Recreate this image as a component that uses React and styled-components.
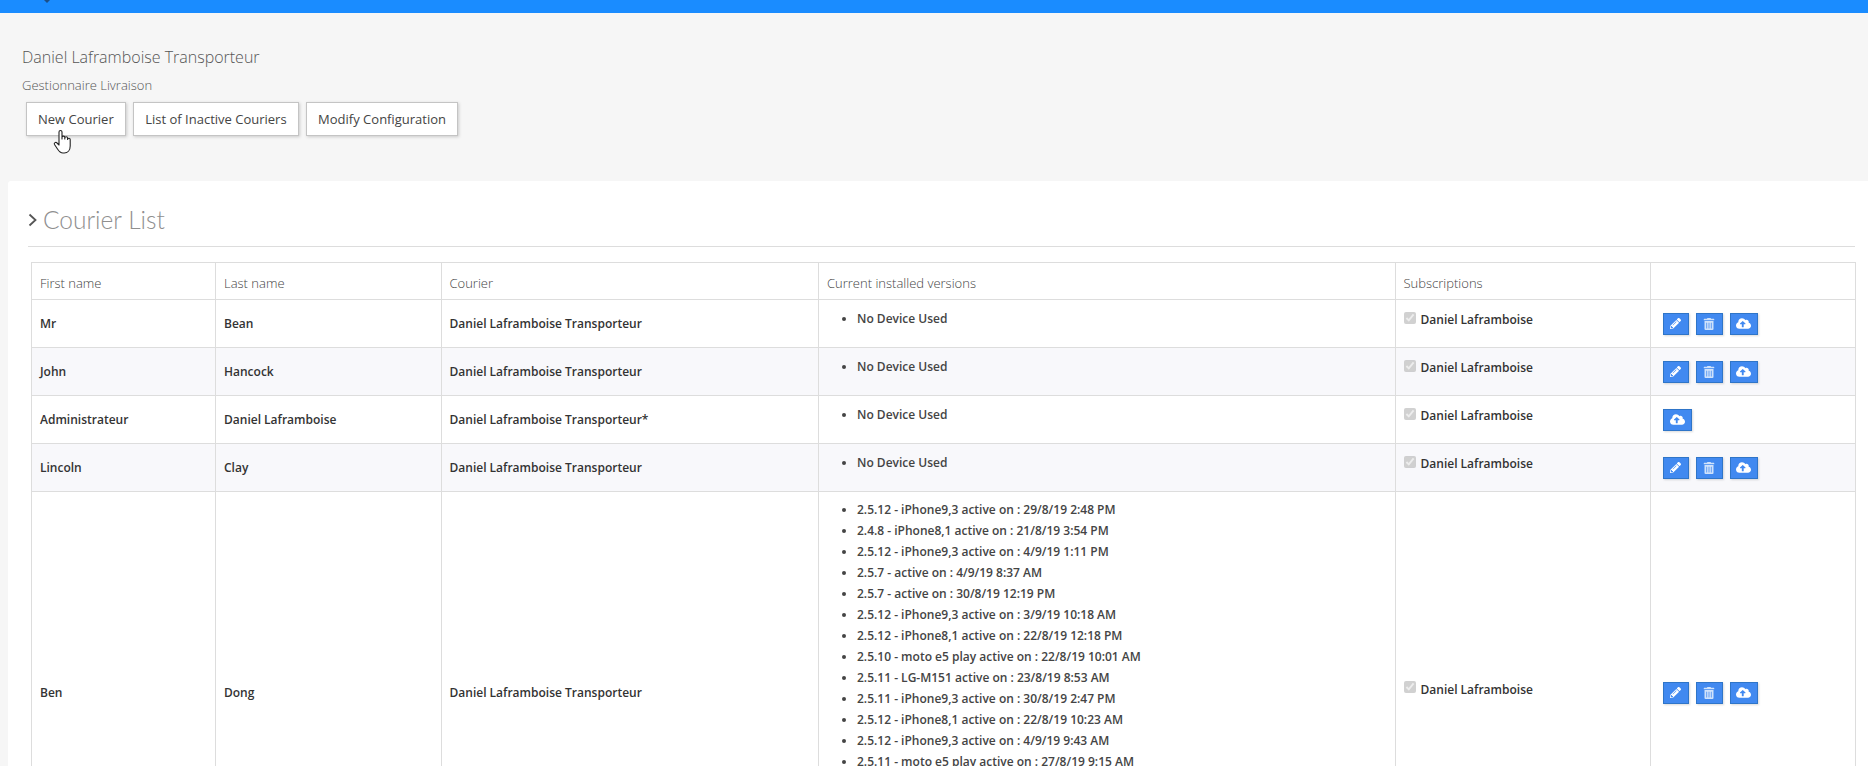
import React from 'react';
import styled, { createGlobalStyle } from 'styled-components';
import { FaPencilAlt, FaTrashAlt, FaCloudUploadAlt } from 'react-icons/fa';

const COURIER = 'Daniel Laframboise Transporteur';
const NO_DEVICE = ['No Device Used'];

const bigList = [
  '2.5.12 - iPhone9,3 active on : 29/8/19 2:48 PM',
  '2.4.8 - iPhone8,1 active on : 21/8/19 3:54 PM',
  '2.5.12 - iPhone9,3 active on : 4/9/19 1:11 PM',
  '2.5.7 - active on : 4/9/19 8:37 AM',
  '2.5.7 - active on : 30/8/19 12:19 PM',
  '2.5.12 - iPhone9,3 active on : 3/9/19 10:18 AM',
  '2.5.12 - iPhone8,1 active on : 22/8/19 12:18 PM',
  '2.5.10 - moto e5 play active on : 22/8/19 10:01 AM',
  '2.5.11 - LG-M151 active on : 23/8/19 8:53 AM',
  '2.5.11 - iPhone9,3 active on : 30/8/19 2:47 PM',
  '2.5.12 - iPhone8,1 active on : 22/8/19 10:23 AM',
  '2.5.12 - iPhone9,3 active on : 4/9/19 9:43 AM',
  '2.5.11 - moto e5 play active on : 27/8/19 9:15 AM'
];

const couriers = [
  { first: 'Mr', last: 'Bean', courier: COURIER, versions: NO_DEVICE, canEdit: true },
  { first: 'John', last: 'Hancock', courier: COURIER, versions: NO_DEVICE, canEdit: true },
  { first: 'Administrateur', last: 'Daniel Laframboise', courier: `${COURIER}*`, versions: NO_DEVICE, canEdit: false },
  { first: 'Lincoln', last: 'Clay', courier: COURIER, versions: NO_DEVICE, canEdit: true },
  { first: 'Ben', last: 'Dong', courier: COURIER, versions: bigList, canEdit: true, tall: true }
];

const GlobalStyle = createGlobalStyle`
  html, body {
    margin: 0;
    height: 100%;
    overflow: hidden;
    background: #f6f6f6;
    font-family: "Open Sans", "Liberation Sans", sans-serif;
  }
`;

const Page = styled.div`
  height: 766px;
  overflow: hidden;
`;

const TopBar = styled.div`
  position: relative;
  height: 13px;
  background: #1a8cff;

  &::after {
    content: '';
    position: absolute;
    left: 44px;
    top: 0;
    border: 3px solid transparent;
    border-top-color: #1c4f86;
  }
`;

const PageHeader = styled.header`
  padding: 33px 0 0 22px;
  height: 168px;
  box-sizing: border-box;
`;

const Title = styled.h1`
  margin: 0;
  font-size: 16px;
  line-height: 22px;
  font-weight: 300;
  color: #555;
`;

const Subtitle = styled.div`
  margin-top: 8px;
  font-size: 13px;
  line-height: 18px;
  font-weight: 300;
  color: #555;
`;

const Actions = styled.div`
  display: flex;
  gap: 7.5px;
  margin: 8px 0 0 4px;
`;

const ActionButton = styled.button`
  position: relative;
  height: 34px;
  padding: 0 11px;
  background: #fff;
  border: 1px solid #c4c4c4;
  box-shadow: 1px 1px 3px rgba(0, 0, 0, 0.18);
  font-family: inherit;
  font-size: 13px;
  color: #444;
`;

const Cursor = styled.svg`
  position: absolute;
  left: 26px;
  top: 26px;
  width: 19px;
  height: 25px;
`;

const Card = styled.main`
  margin-left: 8px;
  height: 585px;
  padding: 21px 13px 0 20px;
  background: #fff;
  border-radius: 3px 0 0 0;
  box-sizing: border-box;
`;

const Heading = styled.h2`
  display: flex;
  align-items: center;
  gap: 6px;
  margin: 0;
  padding-bottom: 9px;
  height: 45px;
  box-sizing: border-box;
  border-bottom: 1px solid #ddd;
  font-family: Lato, "Open Sans", sans-serif;
  font-size: 24.5px;
  font-weight: 300;
  color: #8f8f8f;
`;

const Chevron = styled.svg`
  width: 9px;
  height: 14px;
  margin-top: 1px;
`;

const Table = styled.table`
  margin: 15px 0 0 3px;
  width: 1824px;
  table-layout: fixed;
  border-collapse: collapse;
  font-size: 12px;
  color: #333;
`;

const Th = styled.th`
  height: 33px;
  padding: 3px 8px 0;
  border: 1px solid #ddd;
  text-align: left;
  font-size: 13px;
  font-weight: 300;
  color: #444;
`;

const Row = styled.tr`
  height: ${p => (p.$tall ? '402px' : '48px')};
  background: ${p => (p.$striped ? '#f8f8fb' : '#fff')};
`;

const Td = styled.td`
  padding: 0 8px;
  border: 1px solid #ddd;
  font-weight: 600;
`;

const VersionsCell = styled(Td)`
  vertical-align: top;
  padding: ${p => (p.$tall ? '7px' : '8px')} 8px 0;
`;

const VersionList = styled.ul`
  margin: 0;
  padding: 0 0 0 30px;
  line-height: 21px;
  color: #444;
`;

const SubscriptionCell = styled(Td)`
  vertical-align: ${p => (p.$tall ? 'middle' : 'top')};
  padding-top: ${p => (p.$tall ? '0' : '11px')};
  padding-bottom: ${p => (p.$tall ? '7px' : '0')};
`;

const Subscription = styled.label`
  display: flex;
  align-items: center;
  gap: 5px;
`;

const Check = styled.input`
  width: 12px;
  height: 12px;
  margin: 0 0 4px 0;
`;

const Tools = styled.div`
  display: flex;
  gap: 7px;
  padding-left: 4px;
`;

const IconButton = styled.button`
  display: flex;
  align-items: center;
  justify-content: center;
  width: ${p => p.$width}px;
  height: 22px;
  padding: 0;
  background: #4189f0;
  border: 1px solid #2f75c8;
  box-shadow: 1px 1px 2px rgba(0, 0, 0, 0.15);
  color: #fff;
  font-size: ${p => p.$size}px;
`;

const HandCursor = () => (
  <Cursor viewBox="0 0 19 25" fill="#fff" stroke="#222" strokeWidth="1.1" strokeLinejoin="round">
    <path d="M6 13V3a1.5 1.5 0 0 1 3 0v7l0-1.5a1.4 1.4 0 0 1 2.8 0V10v-.8a1.4 1.4 0 0 1 2.8 0v1.3a1.3 1.3 0 0 1 2.6 0V17c0 4-2.3 7-6 7H10c-3 0-4-1.600-5.500-4L1.500 15.500c-.9-1.500 1.300-3 2.500-1.500L6 16z" />
  </Cursor>
);

const RowTools = ({ canEdit }) => (
  <Tools>
    {canEdit && (
      <IconButton $width={26.5} $size={11}>
        <FaPencilAlt />
      </IconButton>
    )}
    {canEdit && (
      <IconButton $width={26.5} $size={12}>
        <FaTrashAlt color="#cfe2fb" />
      </IconButton>
    )}
    <IconButton $width={canEdit ? 28 : 29} $size={15}>
      <FaCloudUploadAlt />
    </IconButton>
  </Tools>
);

export default function App() {
  return (
    <Page>
      <GlobalStyle />
      <TopBar />
      <PageHeader>
        <Title>{COURIER}</Title>
        <Subtitle>Gestionnaire Livraison</Subtitle>
        <Actions>
          <ActionButton>
            New Courier
            <HandCursor />
          </ActionButton>
          <ActionButton>List of Inactive Couriers</ActionButton>
          <ActionButton>Modify Configuration</ActionButton>
        </Actions>
      </PageHeader>
      <Card>
        <Heading>
          <Chevron viewBox="0 0 9 14" fill="none" stroke="#555" strokeWidth="1.8">
            <path d="M1.500 1.500 7.500 7l-6 5.500" />
          </Chevron>
          Courier List
        </Heading>
        <Table>
          <colgroup>
            <col style={{ width: 184 }} />
            <col style={{ width: 225.5 }} />
            <col style={{ width: 377.5 }} />
            <col style={{ width: 576.5 }} />
            <col style={{ width: 255 }} />
            <col style={{ width: 205 }} />
          </colgroup>
          <thead>
            <tr>
              <Th>First name</Th>
              <Th>Last name</Th>
              <Th>Courier</Th>
              <Th>Current installed versions</Th>
              <Th>Subscriptions</Th>
              <Th />
            </tr>
          </thead>
          <tbody>
            {couriers.map((c, i) => (
              <Row key={c.first} $striped={i % 2 === 1} $tall={c.tall}>
                <Td>{c.first}</Td>
                <Td>{c.last}</Td>
                <Td>{c.courier}</Td>
                <VersionsCell $tall={c.tall}>
                  <VersionList>
                    {c.versions.map((v, j) => (
                      <li key={j}>{v}</li>
                    ))}
                  </VersionList>
                </VersionsCell>
                <SubscriptionCell $tall={c.tall}>
                  <Subscription>
                    <Check type="checkbox" checked disabled readOnly />
                    Daniel Laframboise
                  </Subscription>
                </SubscriptionCell>
                <Td>
                  <RowTools canEdit={c.canEdit} />
                </Td>
              </Row>
            ))}
          </tbody>
        </Table>
      </Card>
    </Page>
  );
}
